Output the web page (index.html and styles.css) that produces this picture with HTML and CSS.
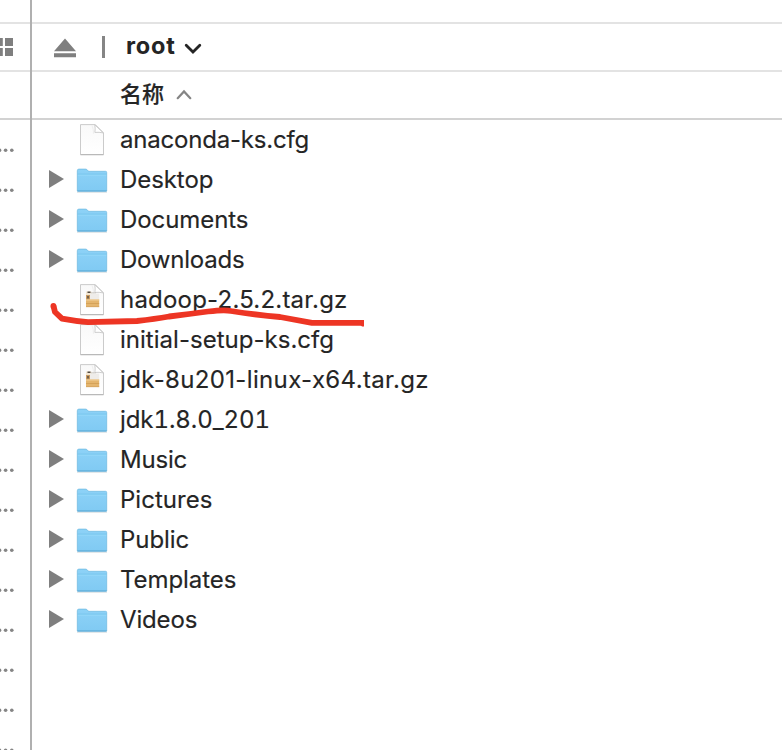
FILE: index.html
```
<!DOCTYPE html>
<html lang="zh-CN">
<head>
<meta charset="utf-8">
<title>root</title>
<link rel="stylesheet" href="styles.css">
</head>
<body>
<svg class="defs" aria-hidden="true">
  <defs>
    <linearGradient id="blue" x2="0" y2="1"><stop stop-color="#8dd2f7"/><stop offset="1" stop-color="#80caf3"/></linearGradient>
    <linearGradient id="paper" x2="0" y2="1"><stop stop-color="#f9f9f9"/><stop offset="1" stop-color="#fff"/></linearGradient>
  </defs>
  <symbol id="folder" viewBox="0 0 32 32">
    <path d="M1 28.200h30" stroke="#d5dce0" stroke-width="1"/>
    <g transform="translate(0 .8)">
    <path d="M1.3 25.8V6q0-1.700 1.500-1.700h7q1 0 1.500 1t1.600 1.200h16.700q1.100 0 1.100 1.200v18.100q0 .7-.8.7H2q-.7 0-.7-.7z" fill="url(#blue)" stroke="#6db8df" stroke-width=".7"/>
    <path d="M1.700 9.400h28.600" stroke="#6fbee8" stroke-width=".8"/>
    <path d="M1.700 10.300h28.600" stroke="#9adcfb" stroke-width=".8"/>
    <path d="M1.200 26.100h29.600" stroke="#5ba9d3" stroke-width=".9"/>
    </g>
  </symbol>
  <symbol id="file" viewBox="0 0 32 32">
    <path d="M4.500.6h14.800l8.200 8.200v21.800h-23z" fill="url(#paper)" stroke="#c5c5c5" stroke-width=".9" stroke-linejoin="round"/>
    <path d="M4.500 30.700h23" stroke="#b4b4b4"/>
    <path d="M18.800.8q.7 4.200.1 7.600 4.200-.4 8.300.5z" fill="#fff" stroke="#c8c8c8" stroke-width=".9"/>
    <path d="M16 1.500q1.800 4 1.500 8.200" stroke="#eee" fill="none"/>
  </symbol>
  <symbol id="archive" viewBox="0 0 32 32">
    <use href="#file"/>
    <path d="M10 7.500h5.500v8H10z" fill="#f3e6d0"/>
    <path d="M10 11h4v5h-4z" fill="#c99a60"/>
    <path d="M11.500 8.300h3M12 12v2.500" stroke="#534a42" stroke-width="1.400"/>
    <path d="M14 9.500h9.200v6.500H14z" fill="#eeece9"/>
    <path d="M15 8.800h5" stroke="#c4beb8" stroke-width=".8"/>
    <path d="M10 15.500h13.200v7.400H10z" fill="#e4b56e"/>
    <path d="M10 16h13.200" stroke="#f1d199"/>
    <path d="M10 19.500h13.200M10 22.700h13.200" stroke="#cf994f" stroke-width=".7"/>
  </symbol>
</svg>
<div class="window">
  <aside class="side">
    <div class="strip"></div>
    <div class="side-tools"><svg width="14" height="20" viewBox="0 0 14 20"><path d="M-5 1h7.800v8H-5zM5 1h8v8H5zM-5 11h7.800v8H-5zM5 11h8v8H5z" fill="#7f7f7f"/></svg></div>
    <div class="side-head"></div>
    <div class="dots" id="dots"></div>
  </aside>
  <main class="main">
    <div class="strip"></div>
    <header class="path">
      <svg class="eject" width="24" height="20" viewBox="0 0 24 20"><path d="M12 .5L23 13.200H1zM1 15.200h22v4H1z" fill="#7f7f7f"/></svg>
      <span class="bar"></span>
      <b class="root">root</b>
      <svg class="down" width="18" height="12" viewBox="0 0 18 12"><path d="M2.200 2.200L9 9l6.800-6.800" fill="none" stroke="#252525" stroke-width="2.800" stroke-linecap="round"/></svg>
    </header>
    <div class="column"><span class="name">名称</span><svg class="up" width="16" height="11" viewBox="0 0 16 11"><path d="M1.700 9.200L8 2.400l6.300 6.800" fill="none" stroke="#858585" stroke-width="2.200" stroke-linecap="round"/></svg></div>
    <ul class="list" id="list"></ul>
    <svg class="mark" width="320" height="28" viewBox="0 0 320 28"><path d="M3.500 6L5 12L12 18.600Q25 21 38 22.200L87 21Q105 19 119 16.500Q140 14 158 11.500Q175 9.500 181 11Q210 15.500 230 17L262 22.800H314" fill="none" stroke="#ed3524" stroke-width="5.800" stroke-linejoin="round"/><path d="M310.500 25h3.500v1.500h-2z" fill="#ed3524"/><circle cx="3.400" cy="6" r="2.900" fill="#ed3524"/></svg>
  </main>
</div>
<script src="script.js"></script>
</body>
</html>
```
FILE: styles.css
```
* { box-sizing: border-box; }
body { margin: 0; background: #fff; color: #252525; font-family: Inter, "Noto Sans CJK SC", sans-serif; }
.defs { position: absolute; width: 0; height: 0; }
.window { display: flex; height: 750px; overflow: hidden; }
.side { width: 32px; flex: none; border-right: 2px solid #b0b0b0; overflow: hidden; }
.main { flex: 1; position: relative; }
.strip { height: 24px; border-bottom: 2px solid #e3e3e3; }
.side-tools { height: 48px; border-bottom: 2px solid #e3e3e3; padding-top: 13px; }
.side-tools svg { display: block; }
.side-head { height: 48px; border-bottom: 2px solid #d2d2d2; }
.dots svg { display: block; height: 40px; }
.path { height: 48px; border-bottom: 2px solid #e3e3e3; display: flex; align-items: center; padding-left: 21px; }
.eject { margin-top: 1px; }
.bar { width: 3px; height: 22px; background: #858585; margin-left: 25px; }
.root { width: 49px; margin-left: 21px; font-size: 23.5px; letter-spacing: .8px; line-height: 30px; font-weight: 700; white-space: nowrap; margin-top: -2px; }
.down { margin: 3px 0 0 9px; }
.column { height: 48px; border-bottom: 2px solid #d2d2d2; display: flex; align-items: center; padding-left: 88px; }
.name { font-family: "Noto Sans CJK SC", sans-serif; font-size: 22px; font-weight: 500; -webkit-text-stroke: .2px #252525; line-height: 30px; width: 44px; margin-top: -7px; }
.up { margin: -2px 0 0 12px; }
.list { margin: 0; padding: 0; list-style: none; }
.row { height: 40px; display: flex; align-items: center; padding-left: 17px; }
.arrow { width: 15px; height: 18px; margin-top: -2px; }
.icon { width: 32px; height: 32px; margin-left: 12px; }
.label { margin-left: 12px; font-size: 24px; line-height: 32px; white-space: nowrap; letter-spacing: -.07px; -webkit-text-stroke: .15px #252525; }
.tabular { font-variant-numeric: tabular-nums; }
.mark { position: absolute; left: 18px; top: 300px; }
```
FILE: script.js
```
const rows = [
  ["file", "anaconda-ks.cfg", -.2], ["folder", "Desktop"], ["folder", "Documents"],
  ["folder", "Downloads", -.22], ["archive", "hadoop-2.5.2.tar.gz", .21],
  ["file", "initial-setup-ks.cfg", .02], ["archive", "jdk-8u201-linux-x64.tar.gz", .35],
  ["folder", "jdk1.8.0_201"], ["folder", "Music", -.2], ["folder", "Pictures", .02],
  ["folder", "Public"], ["folder", "Templates"], ["folder", "Videos", -.15]
];
document.getElementById("list").innerHTML = rows.map(([kind, name, spacing = -.07]) => `
  <li class="row">
    <svg class="arrow" viewBox="0 0 15 18">${kind === "folder" ? '<path d="M0 0L15 9L0 18z" fill="#7f7f7f"/>' : ""}</svg>
    <svg class="icon"><use href="#${kind}"/></svg>
    <span class="label${/^jdk1/.test(name) ? " tabular" : ""}" style="letter-spacing:${spacing}px">${name}</span>
  </li>`).join("");
document.getElementById("dots").innerHTML = Array.from({ length: 16 }, () =>
  '<svg width="30" height="40"><g fill="#858585"><circle cx="-.5" cy="30.300" r="1.800"/><circle cx="5.600" cy="30.300" r="1.800"/><circle cx="11.800" cy="30.300" r="1.800"/></g></svg>').join("");
```
